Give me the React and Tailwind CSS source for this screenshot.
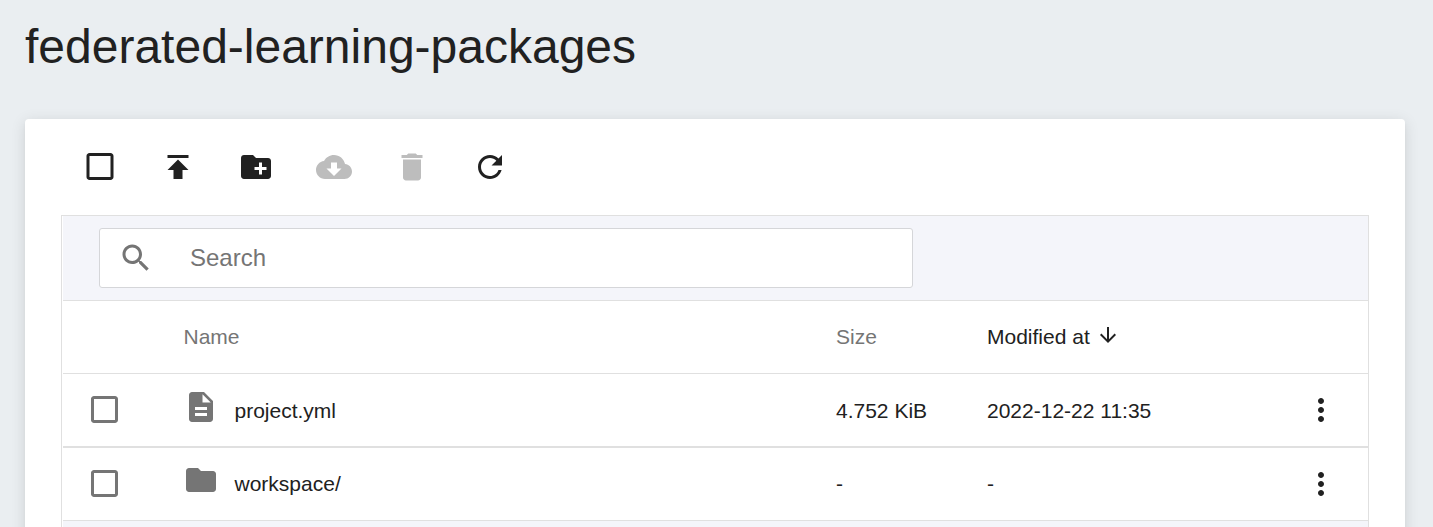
const paths = {
  box: "M19 4.67v14H5v-14h14m0-2H5c-1.1 0-2 .9-2 2v14c0 1.1.9 2 2 2h14c1.1 0 2-.9 2-2v-14c0-1.1-.9-2-2-2z",
  rowBox: "M19.33 4.67v14h-14v-14h14m0-2h-14c-1.1 0-2 .9-2 2v14c0 1.1.9 2 2 2h14c1.1 0 2-.9 2-2v-14c0-1.1-.9-2-2-2z",
  publish: "M5 4v2h14V4H5zm0 10h4v6h6v-6h4l-7-7-7 7z",
  newFolder: "M20 6h-8l-2-2H4c-1.11 0-1.99.89-1.99 2L2 18c0 1.11.89 2 2 2h16c1.11 0 2-.89 2-2V8c0-1.11-.89-2-2-2zm-1 8h-3v3h-2v-3h-3v-2h3V9h2v3h3v2z",
  download: "M19.35 10.04C18.67 6.59 15.64 4 12 4 9.11 4 6.6 5.64 5.35 8.04 2.34 8.36 0 10.91 0 14c0 3.31 2.69 6 6 6h13c2.76 0 5-2.24 5-5 0-2.64-2.05-4.78-4.65-4.96zM17 13l-5 5-5-5h3V9h4v4h3z",
  trash: "M6 19c0 1.1.9 2 2 2h8c1.1 0 2-.9 2-2V7H6v12zM19 4h-3.5l-1-1h-5l-1 1H5v2h14V4z",
  refresh: "M17.65 6.35C16.2 4.9 14.21 4 12 4c-4.42 0-7.99 3.58-7.99 8s3.57 8 7.99 8c3.73 0 6.84-2.55 7.73-6h-2.08c-.82 2.33-3.04 4-5.65 4-3.31 0-6-2.69-6-6s2.69-6 6-6c1.66 0 3.14.69 4.22 1.78L13 11h7V4l-2.35 2.35z",
  search: "M15.5 14h-.79l-.28-.27C15.41 12.59 16 11.11 16 9.5 16 5.91 13.09 3 9.5 3S3 5.91 3 9.5 5.91 16 9.5 16c1.61 0 3.09-.59 4.23-1.57l.27.28v.79l5 4.99L20.49 19l-4.99-5zm-6 0C7.01 14 5 11.99 5 9.5S7.01 5 9.5 5 14 7.01 14 9.5 11.99 14 9.5 14z",
  down: "M20 12l-1.41-1.41L13 16.17V4h-2v12.17l-5.58-5.59L4 12l8 8 8-8z",
  file: "M14 2H6c-1.1 0-1.99.9-1.99 2L4 20c0 1.1.89 2 1.99 2H18c1.1 0 2-.9 2-2V8l-6-6zm2 16H8v-2h8v2zm0-4H8v-2h8v2zm-3-5V3.5L18.5 9H13z",
  folder: "M10 4H4c-1.1 0-1.99.9-1.99 2L2 18c0 1.1.9 2 2 2h16c1.1 0 2-.9 2-2V8c0-1.1-.9-2-2-2h-8l-2-2z",
  more: "M12 8c1.1 0 2-.9 2-2s-.9-2-2-2-2 .9-2 2 .9 2 2 2zm0 2c-1.1 0-2 .9-2 2s.9 2 2 2 2-.9 2-2-.9-2-2-2zm0 6c-1.1 0-2 .9-2 2s.9 2 2 2 2-.9 2-2-.9-2-2-2z",
};

function Icon({ name, className = "size-9" }) {
  return (
    <svg viewBox="0 0 24 24" fill="currentColor" className={`shrink-0 ${className}`} aria-hidden="true">
      <path d={paths[name]} />
    </svg>
  );
}

const columns = "grid grid-cols-[120px_653px_151px_316px_36px] items-center";

function Row({ icon, name, size, modified, className, textClass = "", iconClass }) {
  return (
    <div className={`${columns} ${className}`}>
      <div className="pl-[23px] text-[#757575]">
        <Icon name="rowBox" />
      </div>
      <div className="flex items-center gap-[15.5px]">
        <Icon name={icon} className={`size-9 text-[#757575] ${iconClass}`} />
        <span className={textClass}>{name}</span>
      </div>
      <div className={textClass}>{size}</div>
      <div className={textClass}>{modified}</div>
      <button>
        <Icon name="more" />
      </button>
    </div>
  );
}

export default function App() {
  return (
    <main className="h-[527px] overflow-hidden bg-[#eaeef1] pr-7 pl-[25px] font-['Liberation_Sans',Arial,sans-serif] text-[21px] leading-[30px] text-[#212121]">
      <h1 className="h-[119px] pt-[19px] text-[48px] leading-[56px]">federated-learning-packages</h1>
      <section className="h-[500px] rounded bg-white px-9 pt-[30px] shadow-[0_3px_15px_rgba(0,0,0,0.12),0_3px_3px_rgba(0,0,0,0.04)]">
        <div className="flex h-[66px] items-start gap-[42px] pl-[21px]">
          <Icon name="box" />
          <Icon name="publish" />
          <Icon name="newFolder" />
          <Icon name="download" className="size-9 text-[#bdbdbd]" />
          <Icon name="trash" className="size-9 text-[#bdbdbd]" />
          <Icon name="refresh" />
        </div>
        <div className="h-[400px] border border-[#e0e0e0] pl-px">
          <div className="h-[85px] border-b border-[#e0e0e0] bg-[#f4f5fa] pt-3 pl-9">
            <div className="flex h-[60px] w-[814px] items-center gap-9 rounded-[3px] border border-[#d5d6d9] bg-white pl-[18px] text-2xl text-[#757575]">
              <Icon name="search" />
              <span>Search</span>
            </div>
          </div>
          <div className={`${columns} h-[73px] border-b border-[#e0e0e0]`}>
            <div />
            <div className="pl-[0.5px] text-[#757575]">Name</div>
            <div className="text-[#757575]">Size</div>
            <div className="flex items-center gap-[6px]">
              Modified at
              <Icon name="down" className="mb-[5px] size-6" />
            </div>
          </div>
          <Row icon="file" name="project.yml" size="4.752 KiB" modified="2022-12-22 11:35" className="h-[74px] border-b-2 border-[#e0e0e0]" textClass="pt-[2px]" iconClass="mb-[6px]" />
          <Row icon="folder" name="workspace/" size="-" modified="-" className="h-[73px] border-b border-[#e0e0e0]" iconClass="mb-[8px]" />
          <div className="h-20 bg-[#f4f5fa]" />
        </div>
      </section>
    </main>
  );
}
